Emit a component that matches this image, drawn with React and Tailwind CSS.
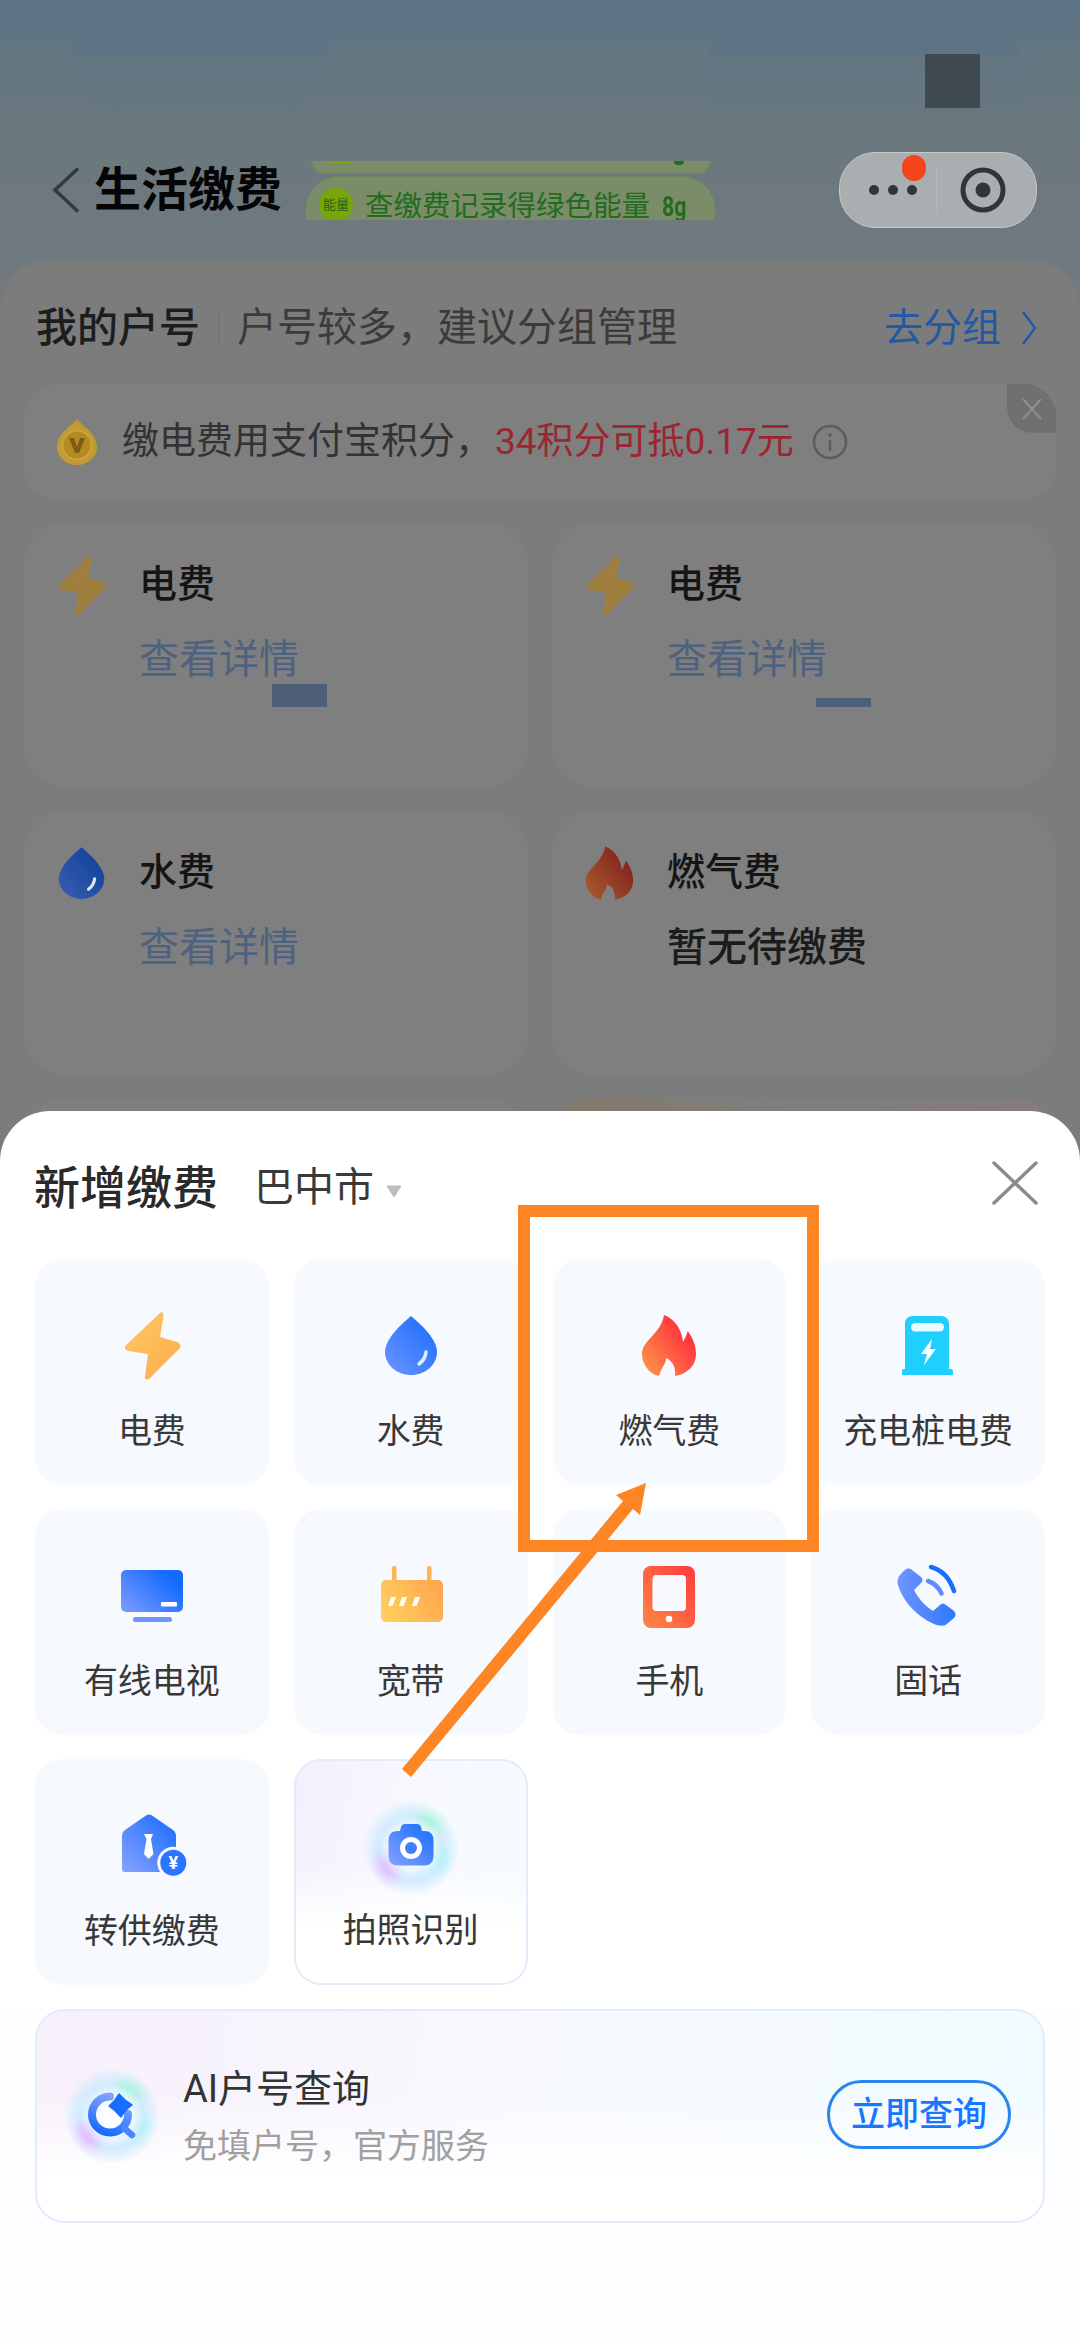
import { useId } from "react";

function Grad({ id, from, to, x1 = 0, y1 = 1, x2 = 1, y2 = 0 }) {
  return (
    <linearGradient id={id} x1={x1} y1={y1} x2={x2} y2={y2}>
      <stop offset="0" stopColor={from} />
      <stop offset="1" stopColor={to} />
    </linearGradient>
  );
}

const BOLT = "M43 4 C45 1 48 2 47.5 6 L44 27 L61 32 C64 33 65 35 64 38 L35 67 C32 71 28 70 29 66 L32 44 L12 41 C9 40 8 37 10 35 Z";
const DROP = "M36 6 C48 16 62 30 62 42 C62 55 50 65 36 65 C22 65 10 55 10 42 C10 30 24 16 36 6 Z";
const FLAME = "M31 5 C42 9 49 20 50 32 C52 28 54 25 54.7 21 C60 28 63 36 63 44 C63 56 54 64 42 66 C43 58 40 51 33 48 C33 54 28 58 26 66 C16 64 9 54 9 44 C9 30 28 24 31 5 Z";

function Bolt({ from = "#fccb64", to = "#ffa94d", className = "w-[72px] h-[72px]" }) {
  const id = useId();
  return (
    <svg viewBox="0 0 72 72" className={className}>
      <defs><Grad id={id} from={from} to={to} x1={0} y1={0} x2={1} y2={1} /></defs>
      <path d={BOLT} fill={`url(#${id})`} />
    </svg>
  );
}

function Drop({ from = "#6f95ff", to = "#146bff", className = "w-[72px] h-[72px]" }) {
  const id = useId();
  return (
    <svg viewBox="0 0 72 72" className={className}>
      <defs><Grad id={id} from={from} to={to} /></defs>
      <path d={DROP} fill={`url(#${id})`} />
      <path d="M51 42 C50.5 47 48 51 44 54" fill="none" stroke="#fff" strokeOpacity=".85" strokeWidth="3.5" strokeLinecap="round" />
    </svg>
  );
}

function Flame({ from = "#ff8b47", to = "#ff3a3f", className = "w-[72px] h-[72px]" }) {
  const id = useId();
  return (
    <svg viewBox="0 0 72 72" className={className}>
      <defs><Grad id={id} from={from} to={to} x1={0.1} y1={0.85} x2={0.75} y2={0.3} /></defs>
      <path d={FLAME} fill={`url(#${id})`} />
    </svg>
  );
}

function Charger() {
  return (
    <svg viewBox="0 0 72 72" className="w-[72px] h-[72px]">
      <path d="M21 6 H49 C54 6 57 9 57 14 V59 H59 C60.5 59 61 60.5 61 62 V65 H10 V62 C10 60.5 10.5 59 12 59 H13 V14 C13 9 16 6 21 6 Z" fill="#1fd0ff" />
      <rect x="19" y="13" width="33" height="8.5" rx="4.2" fill="#fff" fillOpacity=".9" />
      <path d="M40 29 L29 44 L35 44 L32 55 L44 39 L38 39 Z" fill="#fff" />
    </svg>
  );
}

function Tv() {
  const id = useId();
  return (
    <svg viewBox="0 0 72 72" className="w-[72px] h-[72px]">
      <defs><Grad id={id} from="#7497ff" to="#146bff" x1={0} y1={0.8} x2={0.8} y2={0.2} /></defs>
      <rect x="5" y="10" width="62" height="42" rx="5" fill={`url(#${id})`} />
      <rect x="45" y="42" width="16" height="4.5" rx="1" fill="#fff" />
      <rect x="17" y="57" width="39" height="5" rx="2.5" fill="#6f95ff" />
    </svg>
  );
}

function Router() {
  const id = useId();
  return (
    <svg viewBox="0 0 72 72" className="w-[72px] h-[72px]">
      <defs><Grad id={id} from="#ffcf5e" to="#ffa74f" x1={0} y1={0.7} x2={1} y2={0.3} /></defs>
      <rect x="17" y="6" width="4.5" height="18" rx="2.2" fill="#ffb552" />
      <rect x="52" y="6" width="4.5" height="18" rx="2.2" fill="#ffb552" />
      <rect x="6" y="20" width="62" height="42" rx="5" fill={`url(#${id})`} />
      <path d="M16 37 H21 L17.5 46 H13 Z M27 37 H32 L28.5 46 H24 Z M40 37 H45 L41.5 46 H37 Z" fill="#fff" />
    </svg>
  );
}

function Phone() {
  const id = useId();
  return (
    <svg viewBox="0 0 72 72" className="w-[72px] h-[72px]">
      <defs><Grad id={id} from="#ff8745" to="#ff3a3f" /></defs>
      <rect x="10" y="6" width="52" height="62" rx="8" fill={`url(#${id})`} />
      <rect x="19.5" y="15" width="33.5" height="36" rx="4" fill="#f8faff" />
      <circle cx="36" cy="59" r="3.3" fill="#fff" />
    </svg>
  );
}

function Telephone() {
  const id = useId();
  return (
    <svg viewBox="0 0 72 72" className="w-[72px] h-[72px]">
      <defs><Grad id={id} from="#6f95ff" to="#2f78ff" x1={0} y1={0.5} x2={1} y2={0.5} /></defs>
      <path d="M13 10 C15 8 18 8 20 10 L29 17 C31 19 31 21 29 23 L22 30 C26 38 33 46 41 51 L48 45 C50 43 52 43 54 45 L62 51 C64 53 64 56 62 58 L56 63 C52 67 47 66 42 64 C26 57 11 42 6 25 C4 19 8 14 13 10 Z" fill={`url(#${id})`} />
      <path d="M39 7 C50 10 58 19 62 31" fill="none" stroke="#186cff" strokeWidth="4.5" strokeLinecap="round" />
      <path d="M36 21 C42 23 47 28 49.5 33.5" fill="none" stroke="#5c8cff" strokeWidth="4.5" strokeLinecap="round" />
    </svg>
  );
}

function Transfer() {
  const id = useId();
  return (
    <svg viewBox="0 0 72 72" className="w-[72px] h-[72px]">
      <defs><Grad id={id} from="#86a2ff" to="#146bff" /></defs>
      <path d="M30 5.5 Q33 3.5 36 5.5 L57 20 Q60 22 60 25 V59 Q60 62 57 62 H9 Q6 62 6 59 V25 Q6 22 9 20 Z" fill={`url(#${id})`} />
      <path d="M28 24 H37 L35 29 L37.5 44 L32.7 49 L28 44 L30.5 29 Z" fill="#fff" />
      <circle cx="57.3" cy="52.7" r="16" fill="#f7faff" />
      <circle cx="57.3" cy="52.7" r="13" fill="#2a74ff" />
      <text x="57.3" y="59" textAnchor="middle" fontSize="18" fontWeight="700" fill="#fff" fontFamily="Roboto, sans-serif">¥</text>
    </svg>
  );
}

function Glow({ children }) {
  const id = useId();
  return (
    <svg viewBox="0 0 100 100" className="h-[100px] w-[100px] overflow-visible">
      <defs>
        <radialGradient id={`${id}f`}>
          <stop offset="0.68" stopColor="#fff" />
          <stop offset="1" stopColor="#000" />
        </radialGradient>
        <mask id={`${id}m`} maskUnits="userSpaceOnUse" x="0" y="0" width="100" height="100">
          <circle cx="50" cy="50" r="48" fill={`url(#${id}f)`} />
        </mask>
        <filter id={`${id}b`} filterUnits="userSpaceOnUse" x="-30" y="-30" width="160" height="160">
          <feGaussianBlur stdDeviation="6" />
        </filter>
      </defs>
      <g mask={`url(#${id}m)`}>
        <circle cx="50" cy="50" r="48" fill="#cfeaff" />
        <g filter={`url(#${id}b)`}>
          <ellipse cx="72" cy="20" rx="16" ry="12" fill="#a6f3e0" />
          <ellipse cx="22" cy="74" rx="14" ry="16" fill="#dcbcff" />
          <ellipse cx="84" cy="66" rx="9" ry="15" fill="#a8f0fb" />
          <circle cx="50" cy="50" r="25" fill="#fbfdff" />
        </g>
      </g>
      {children}
    </svg>
  );
}

function Camera() {
  const id = useId();
  return (
    <Glow>
      <defs><Grad id={id} from="#86a2ff" to="#146bff" /></defs>
      <path d="M39 33 L40 29 Q41 26 44 26 H56 Q59 26 60 29 L61 33 H63 Q72.5 33 72.5 42 V58 Q72.5 67.5 63 67.5 H37 Q27.5 67.5 27.5 58 V42 Q27.5 33 37 33 Z" fill={`url(#${id})`} />
      <circle cx="50" cy="50" r="11" fill="#fff" />
      <circle cx="50" cy="50" r="6" fill="#3f80ff" />
    </Glow>
  );
}

function AiMark() {
  const id = useId();
  return (
    <Glow>
      <defs><Grad id={id} from="#86a2ff" to="#146bff" x1={0.6} y1={0} x2={0.2} y2={1} /></defs>
      <path d="M48 30.5 A18 18 0 1 0 66 48" fill="none" stroke={`url(#${id})`} strokeWidth="8" strokeLinecap="round" />
      <path d="M57 28 Q63 35 70 39 Q63 44 59 51 Q53 44 47 40 Q53 35 57 28 Z" fill="#176dff" stroke="#176dff" strokeWidth="1.5" strokeLinejoin="round" />
      <path d="M63 63 L70 69" stroke="#4a85ff" strokeWidth="6.5" strokeLinecap="round" />
    </Glow>
  );
}

function Medal() {
  return (
    <svg viewBox="0 0 40 46" className="h-[46px] w-[40px]">
      <path d="M20 0 C24 6 40 14 40 28 C40 38 31 46 20 46 C9 46 0 38 0 28 C0 14 16 6 20 0 Z" fill="#c29a34" />
      <circle cx="20" cy="26" r="14.5" fill="#b38a24" stroke="#caa53c" strokeWidth="2" />
      <path d="M12 19 H17 L20 28 L23 19 H28 L22 34 H18 Z" fill="#7f5c0e" />
    </svg>
  );
}

const tiles = [
  { label: "电费", icon: <Bolt /> },
  { label: "水费", icon: <Drop /> },
  { label: "燃气费", icon: <Flame /> },
  { label: "充电桩电费", icon: <Charger /> },
  { label: "有线电视", icon: <Tv /> },
  { label: "宽带", icon: <Router /> },
  { label: "手机", icon: <Phone /> },
  { label: "固话", icon: <Telephone /> },
  { label: "转供缴费", icon: <Transfer /> },
];

function Tile({ label, icon }) {
  return (
    <div className="flex h-[226px] flex-col items-center rounded-[27px] bg-[#f6f9fe] pt-[51px]">
      {icon}
      <div className="mt-[27px] text-[34px] leading-[44px] text-[#383838]">{label}</div>
    </div>
  );
}

function BillCard({ icon, title, detail, dark, children }) {
  return (
    <div className="flex h-[264px] rounded-[40px] bg-[#7f7f7f] pl-[26px] pt-[31px]">
      <div className="w-[89px] shrink-0">{icon}</div>
      <div className="pt-[5px]">
        <div className="text-[38px] font-medium leading-[50px] text-[#151515]">{title}</div>
        <div className={dark ? "mt-[27px] text-[40px] font-medium leading-[48px] text-[#1c1c1c]" : "mt-[27px] text-[40px] leading-[48px] text-[#4d6280]"}>{detail}</div>
        {children}
      </div>
    </div>
  );
}

const smallIcon = "h-[63px] w-[63px]";

export default function App() {
  return (
    <div className="relative h-[2341px] w-[1080px] overflow-hidden bg-[linear-gradient(180deg,#5b7488_0,#647680_60px,#6b787e_150px,#70797f_250px,#7b7c7e_520px)] font-['Roboto','Noto_Sans_CJK_SC',sans-serif]">
      {/* faint banner shapes behind the status bar */}
      <div className="absolute left-[70px] top-[18px] h-[37px] w-[260px] rounded-t-[40px] bg-[#58748a]/40" />
      <div className="absolute left-[80px] top-[55px] h-[52px] w-[240px] rounded-b-[40px] bg-[#637688]/30" />
      <div className="absolute left-[709px] top-[33px] h-[22px] w-[310px] rounded-t-[30px] bg-[#58748a]/40" />
      <div className="absolute left-[705px] top-[55px] h-[53px] w-[325px] rounded-b-[30px] bg-[#637688]/30" />
      <div className="absolute left-[925px] top-[54px] h-[54px] w-[55px] bg-[#3f4a52]" />

      <div className="flex h-[228px] items-end pl-[52px] pr-[43px]">
        <div className="flex h-[76px] w-full items-center">
          <svg viewBox="0 0 28 46" className="h-[46px] w-[28px]">
            <path d="M26 1.5 L3 23 L26 44.5" fill="none" stroke="#333a3e" strokeWidth="3.5" />
          </svg>
          <div className="ml-[14px] whitespace-nowrap text-[47px] font-bold leading-[60px] text-[#050505]">生活缴费</div>
          <div className="ml-[23px] flex h-[59px] w-[411px] shrink-0 flex-col items-center overflow-hidden">
            <div className="flex h-[13px] w-[400px] shrink-0 items-start justify-between rounded-b-[28px] border-x border-b border-[#688a55] bg-[#7b8c68] pl-[16px] pr-[26px]">
              <span className="h-[3px] w-[26px] rounded-b-full bg-[#7da314]" />
              <span className="h-[4px] w-[10px] rounded-b-full bg-[#236b1e]" />
            </div>
            <div className="mt-[2px] flex h-[70px] w-[411px] shrink-0 items-start rounded-[34px] border border-[#688a55] bg-[#7b8c68] pl-[13px] pt-[11px]">
              <div className="flex h-[34px] w-[34px] shrink-0 items-center justify-center rounded-full bg-[#77a50a] text-[13px] leading-[14px] text-[#2a6410]">能量</div>
              <div className="ml-[12px] mt-[1px] whitespace-nowrap text-[28.5px] leading-[36px] text-[#236b1e]">
                查缴费记录得绿色能量<span className="ml-[12px] inline-block origin-left scale-x-75 font-bold">8g</span>
              </div>
            </div>
          </div>
          <div className="relative ml-auto flex h-[76px] w-[198px] shrink-0 items-center rounded-[36px] border border-[#c5cacc] bg-[#a9aeb1] pl-[29px]">
            <div className="flex gap-[9px]">
              <span className="h-[10px] w-[10px] rounded-full bg-[#2f363b]" />
              <span className="h-[10px] w-[10px] rounded-full bg-[#2f363b]" />
              <span className="h-[10px] w-[10px] rounded-full bg-[#2f363b]" />
            </div>
            <div className="ml-[19px] h-[46px] w-px bg-[#b3b8bb]" />
            <svg viewBox="0 0 46 46" className="ml-[23px] h-[46px] w-[46px]">
              <circle cx="23" cy="23" r="20" fill="none" stroke="#2f363b" strokeWidth="5" />
              <circle cx="23" cy="23" r="7.5" fill="#2f363b" />
            </svg>
            <span className="absolute left-[62px] top-[2px] h-[26px] w-[24px] rounded-full bg-[#f5451c]" />
          </div>
        </div>
      </div>

      <div className="mt-[32px] rounded-t-[50px] bg-[#7c7c7d] px-[24px] pt-[38px]">
        <div className="flex h-[60px] items-center pl-[12px] pr-[19px]">
          <div className="text-[41px] font-medium leading-[60px] text-[#1d1d1d]">我的户号</div>
          <div className="ml-[18px] h-[36px] w-px bg-[#707070]" />
          <div className="ml-[18px] text-[40px] leading-[60px] text-[#3b3b3b]">户号较多，建议分组管理</div>
          <div className="ml-auto text-[39px] leading-[60px] text-[#215aa2]">去分组</div>
          <svg viewBox="0 0 16 36" className="ml-[20px] h-[36px] w-[16px]">
            <path d="M2 2 L14 18 L2 34" fill="none" stroke="#215aa2" strokeWidth="2.5" />
          </svg>
        </div>

        <div className="relative mt-[26px] flex h-[115px] items-center rounded-[32px] bg-[#7f7f7f] pl-[33px]">
          <Medal />
          <div className="ml-[25px] whitespace-nowrap text-[37px] leading-[50px] text-[#333]">
            缴电费用支付宝积分，<span className="ml-[3px] text-[#9c2630]">34积分可抵0.17元</span>
          </div>
          <svg viewBox="0 0 36 36" className="ml-[18px] h-[36px] w-[36px]">
            <circle cx="18" cy="18" r="16" fill="none" stroke="#5c5c5c" strokeWidth="2.5" />
            <circle cx="18" cy="11" r="1.8" fill="#5c5c5c" />
            <path d="M18 16 V27" stroke="#5c5c5c" strokeWidth="2.5" />
          </svg>
          <div className="absolute right-0 top-0 flex h-[49px] w-[49px] items-center justify-center rounded-bl-[26px] rounded-tr-[32px] bg-[#707070]">
            <svg viewBox="0 0 22 24" className="h-[24px] w-[22px]">
              <path d="M2 2 L20 22 M20 2 L2 22" stroke="#8f8f8f" strokeWidth="2" />
            </svg>
          </div>
        </div>

        <div className="mt-[24px] grid grid-cols-2 gap-[24px]">
          <BillCard icon={<Bolt from="#a27d40" to="#9c803e" className={smallIcon} />} title="电费" detail="查看详情">
            <div className="ml-[133px] h-[23px] w-[55px] bg-[#4d5f78]" />
          </BillCard>
          <BillCard icon={<Bolt from="#a27d40" to="#9c803e" className={smallIcon} />} title="电费" detail="查看详情">
            <div className="ml-[149px] mt-[14px] h-[9px] w-[55px] bg-[#4d5f78]" />
          </BillCard>
          <BillCard icon={<Drop from="#3a5eb3" to="#0c3f96" className={smallIcon} />} title="水费" detail="查看详情" />
          <BillCard icon={<Flame from="#a4552c" to="#8a2a20" className={smallIcon} />} title="燃气费" detail="暂无待缴费" dark />
          <BillCard title="" detail="" />
          <div className="h-[264px] rounded-[40px] bg-[linear-gradient(90deg,#85796b,#7f7f7f_50%,#867a80)]" />
        </div>
      </div>

      {/* bottom sheet */}
      <div className="absolute inset-x-0 bottom-0 h-[1230px] rounded-t-[50px] bg-[linear-gradient(180deg,#fff_70%,#fcfdff)] pl-[35px] pr-[35px] pt-[47px]">
        <div className="flex h-[60px] items-center">
          <div className="-ml-px text-[46px] font-medium leading-[60px] text-[#2a2a2a]">新增缴费</div>
          <div className="ml-[36px] text-[40px] leading-[60px] text-[#3a3a3a]">巴中市</div>
          <svg viewBox="0 0 16 13" className="ml-[12px] mt-[6px] h-[13px] w-[16px]">
            <path d="M1 1 H15 L8 12 Z" fill="#bdbdbd" stroke="#bdbdbd" strokeLinejoin="round" />
          </svg>
          <svg viewBox="0 0 46 44" className="mb-[10px] ml-auto mr-[7px] h-[44px] w-[46px]">
            <path d="M2 2 L44 42 M44 2 L2 42" stroke="#8b8b8b" strokeWidth="3.5" strokeLinecap="round" />
          </svg>
        </div>

        <div className="mt-[41px] grid w-[1010px] grid-cols-4 gap-x-[25px] gap-y-[24px]">
          {tiles.map((t) => (
            <Tile key={t.label} label={t.label} icon={t.icon} />
          ))}
          <div className="flex h-[226px] flex-col items-center rounded-[27px] border-2 border-[#e3ecfa] bg-[linear-gradient(180deg,transparent_45%,#fff_75%),linear-gradient(100deg,#f4effc,#f8f9fe_50%,#f3fbfe)] pt-[49px]">
            <div className="-mb-[17px] -mt-[12px]"><Camera /></div>
            <div className="mt-[27px] text-[34px] leading-[44px] text-[#383838]">拍照识别</div>
          </div>
        </div>

        <div className="mt-[24px] flex h-[214px] w-[1010px] items-center rounded-[30px] border-2 border-[#e3ecfa] bg-[linear-gradient(180deg,transparent_40%,#fff_80%),linear-gradient(100deg,#f7f0fb,#f7f9fe_50%,#f1fbfe)] pl-[25px] pr-[32px]">
          <AiMark />
          <div className="ml-[21px]">
            <div className="text-[38px] leading-[50px] text-[#333]">AI户号查询</div>
            <div className="mt-[10px] text-[34px] leading-[44px] text-[#a0a0a0]">免填户号，官方服务</div>
          </div>
          <div className="mb-[4px] ml-auto flex h-[69px] w-[184px] items-center justify-center rounded-full border-[3px] border-[#2b85ee] text-[34px] font-medium text-[#1677ff]">立即查询</div>
        </div>
      </div>

      {/* annotation */}
      <div className="absolute left-[518px] top-[1205px] h-[347px] w-[301px] border-[12px] border-[#fd8524]" />
      <svg viewBox="0 0 1080 2341" className="absolute inset-0 h-[2341px] w-[1080px]">
        <polygon points="402,1769 623,1501 616,1495 646,1483 640,1515 633,1509 411,1777" fill="#fd8524" />
      </svg>
    </div>
  );
}
